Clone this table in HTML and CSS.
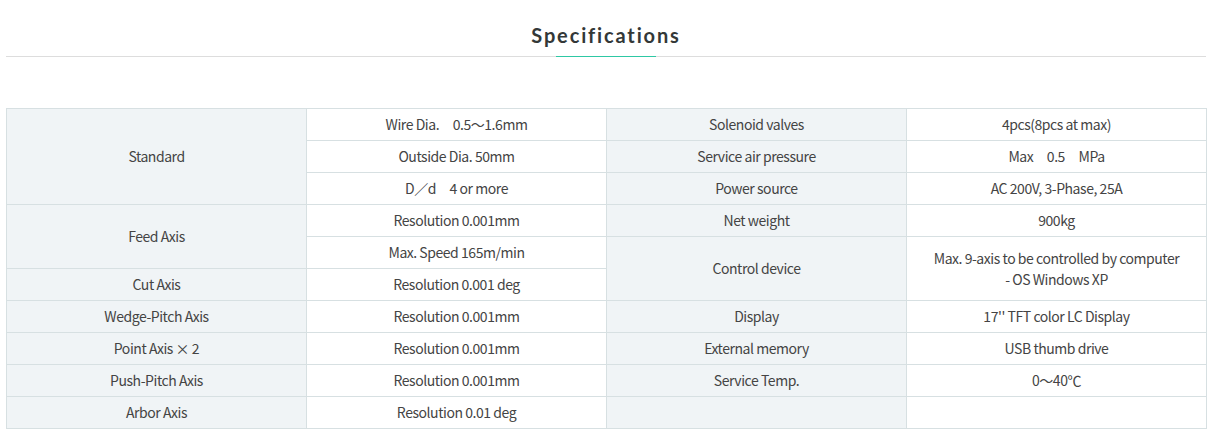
FILE: index.html
```html
<!DOCTYPE html>
<html lang="en">
<head>
<meta charset="utf-8">
<title>Specifications</title>
<link rel="stylesheet" href="styles.css">
</head>
<body>
<div class="page">
  <div class="heading">
    <h2 class="heading-title">Specifications</h2>
  </div>
  <table class="spec">
    <tr>
      <th rowspan="3">Standard</th>
      <td>Wire Dia.　0.5～1.6mm</td>
      <th>Solenoid valves</th>
      <td>4pcs(8pcs at max)</td>
    </tr>
    <tr>
      <td>Outside Dia. 50mm</td>
      <th>Service air pressure</th>
      <td>Max　0.5　MPa</td>
    </tr>
    <tr>
      <td>D／d　4 or more</td>
      <th>Power source</th>
      <td>AC 200V, 3-Phase, 25A</td>
    </tr>
    <tr>
      <th rowspan="2">Feed Axis</th>
      <td>Resolution 0.001mm</td>
      <th>Net weight</th>
      <td>900kg</td>
    </tr>
    <tr>
      <td>Max. Speed 165m/min</td>
      <th rowspan="2">Control device</th>
      <td rowspan="2" class="multi">Max. 9-axis to be controlled by computer<br>- OS Windows XP</td>
    </tr>
    <tr>
      <th>Cut Axis</th>
      <td>Resolution 0.001 deg</td>
    </tr>
    <tr>
      <th>Wedge-Pitch Axis</th>
      <td>Resolution 0.001mm</td>
      <th>Display</th>
      <td>17'' TFT color LC Display</td>
    </tr>
    <tr>
      <th>Point Axis × 2</th>
      <td>Resolution 0.001mm</td>
      <th>External memory</th>
      <td>USB thumb drive</td>
    </tr>
    <tr>
      <th>Push-Pitch Axis</th>
      <td>Resolution 0.001mm</td>
      <th>Service Temp.</th>
      <td>0～40℃</td>
    </tr>
    <tr>
      <th>Arbor Axis</th>
      <td>Resolution 0.01 deg</td>
      <th></th>
      <td></td>
    </tr>
  </table>
</div>
</body>
</html>
```
FILE: styles.css
```css
html, body {
  margin: 0;
  padding: 0;
  background: #ffffff;
}

body {
  font-family: "Noto Sans CJK KR", "Noto Sans", sans-serif;
  color: #444444;
}

.page {
  width: 1200px;
  margin-left: 6px;
  padding-top: 20px;
}

.heading {
  position: relative;
  border-bottom: 1px solid #dddddd;
  text-align: center;
  height: 36px;
}

.heading::after {
  content: "";
  position: absolute;
  left: 550px;
  width: 100px;
  bottom: -1px;
  height: 1px;
  background: #2ec8a4;
}

.heading-title {
  margin: 0;
  font-family: "Lato", "Noto Sans", sans-serif;
  font-size: 20px;
  line-height: 30px;
  font-weight: 700;
  letter-spacing: 1.85px;
  color: #333838;
}

.spec {
  margin-top: 51px;
  width: 1200px;
  border-collapse: collapse;
  table-layout: fixed;
  font-size: 14px;
  letter-spacing: -0.45px;
}

.spec th,
.spec td {
  width: 300px;
  height: 32px;
  padding: 0 8px;
  border: 1px solid #d7e0e2;
  text-align: center;
  vertical-align: middle;
  font-weight: 400;
  color: #444444;
  line-height: 21px;
  box-sizing: border-box;
}

.spec th {
  background: #f0f4f6;
}

.spec td {
  background: #ffffff;
}
```
